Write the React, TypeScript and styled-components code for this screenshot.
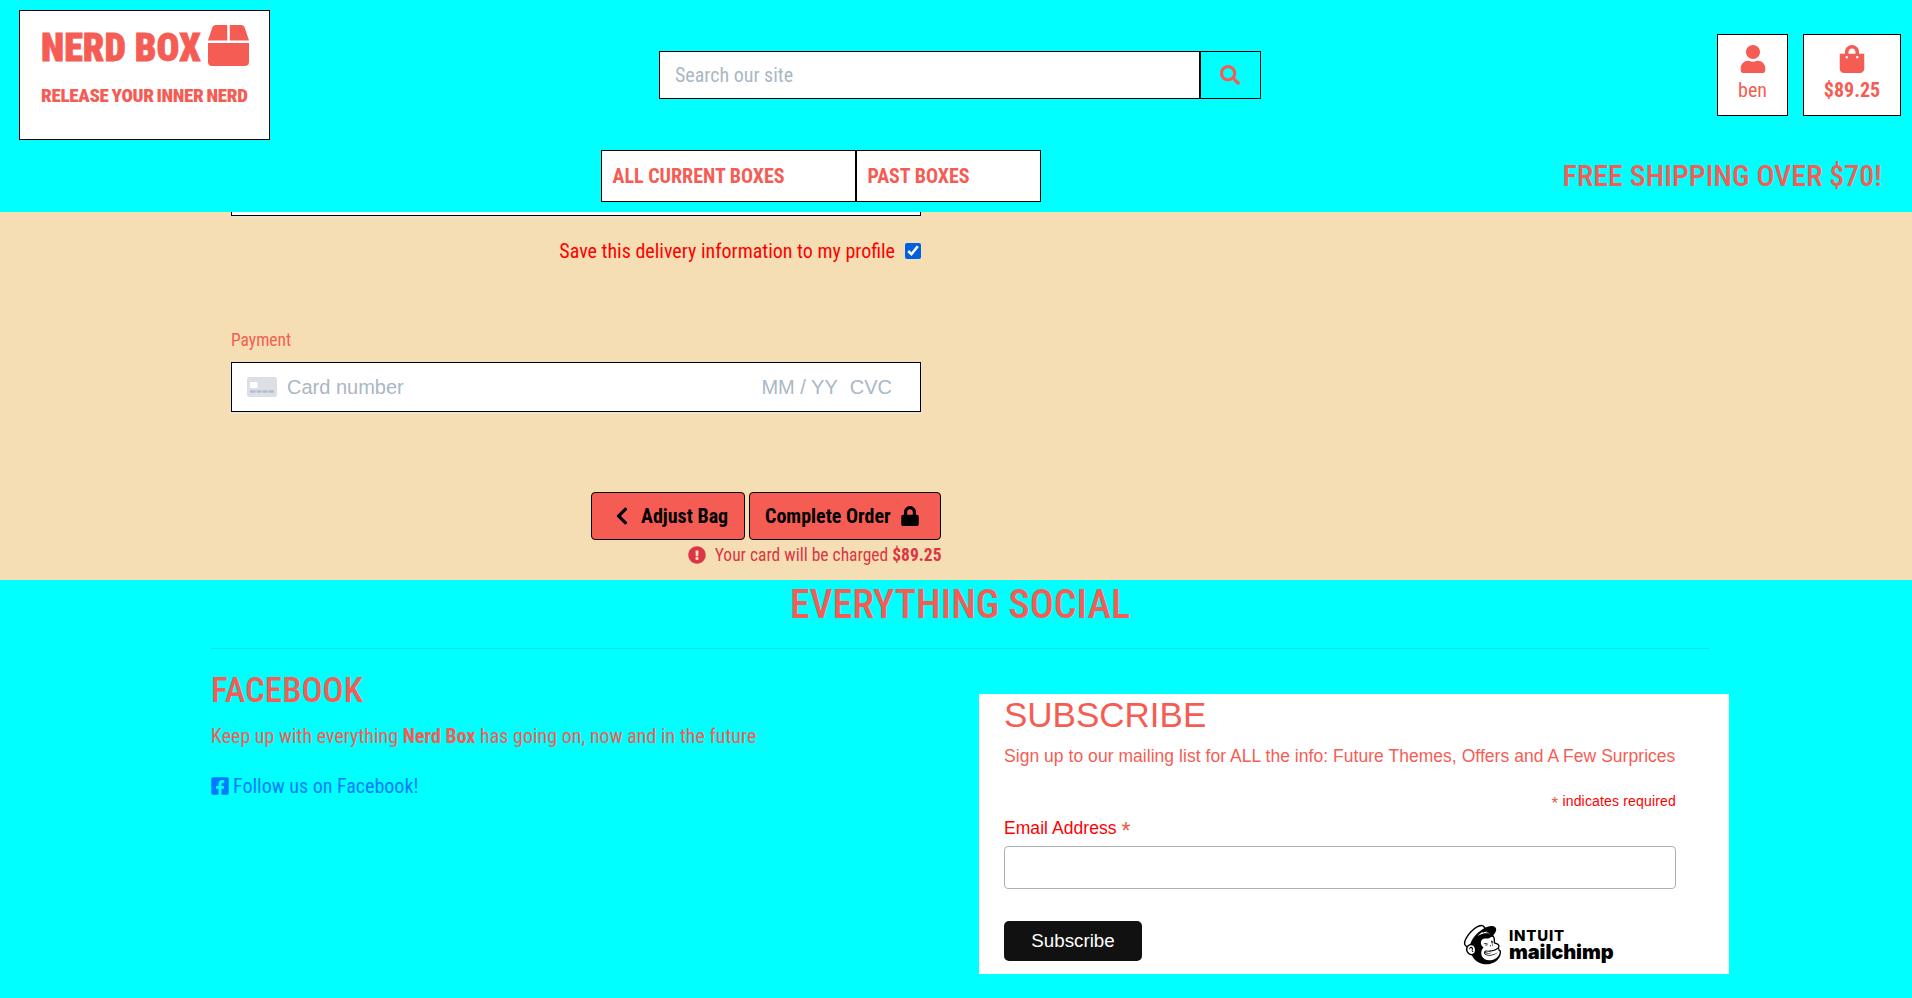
import React from 'react';
import styled, { createGlobalStyle } from 'styled-components';
import {
  FaBox, FaUser, FaShoppingBag, FaSearch, FaLock, FaChevronLeft,
  FaExclamationCircle, FaFacebookSquare, FaMailchimp,
} from 'react-icons/fa';

const coral = '#f55d54';
const condensed = "'Roboto Condensed', Roboto, sans-serif";
const arial = "'Liberation Sans', Arial, sans-serif";

const GlobalStyle = createGlobalStyle`
  *, *::before, *::after { box-sizing: border-box; }
  body { margin: 0; font: 400 20px/30px ${condensed}; color: ${coral}; background: aqua; overflow: hidden; }
  h1, h2, h3, p { margin: 0; }
  svg { display: block; flex: none; }
  a { color: inherit; text-decoration: none; }
  button, input { font: inherit; }
`;

const Page = styled.div`height: 998px; overflow: hidden; background: aqua;`;

const Header = styled.header`height: 212px; background: aqua;`;
const TopRow = styled.div`display: flex; align-items: flex-start; height: 150px; padding: 10px 11px 0 19px;`;

const LogoCard = styled.a`
  display: block; width: 251px; height: 130px; padding: 14px 0 0 21px;
  background: #fff; border: 1px solid #000;
`;
const LogoTop = styled.div`display: flex; align-items: flex-start; gap: 6px; height: 48px;`;
const LogoName = styled.span`
  width: 161px; padding-top: 4px; font-weight: 900; font-size: 38px; line-height: 38px;
  letter-spacing: 0.1px; white-space: nowrap; -webkit-text-stroke: 0.8px ${coral};
`;
const Tagline = styled.div`
  margin-top: 11px; font-weight: 900; font-size: 19px; line-height: 24px; white-space: nowrap;
  letter-spacing: -0.3px; word-spacing: -1.2px;
`;

const SearchForm = styled.form`display: flex; margin: 41px 0 0 389px; width: 602px; height: 48px;`;
const SearchInput = styled.input`
  width: 541px; padding: 0 15px; border: 1px solid #000; border-radius: 0; background: #fff; outline: 0;
  &::placeholder { color: #aab7c4; opacity: 1; }
`;
const SearchButton = styled.button`
  display: flex; align-items: center; justify-content: center; width: 61px; padding: 0 2px 1px 0;
  border: 1px solid #000; background: aqua; color: ${coral};
`;

const Account = styled.div`display: flex; gap: 15px; margin: 24px 0 0 auto;`;
const AccountLink = styled.a<{ $w: number; $bold?: boolean }>`
  display: flex; flex-direction: column; align-items: center; gap: 2px;
  width: ${(p) => p.$w}px; height: 82px; padding-top: 10px;
  border: 1px solid #000; background: #fff; font-weight: ${(p) => (p.$bold ? 700 : 400)};
`;

const NavRow = styled.div`display: flex; align-items: center; height: 52px; padding: 0 30px 0 601px;`;
const NavItem = styled.a<{ $w: number }>`
  display: flex; align-items: center; width: ${(p) => p.$w}px; height: 52px; padding-left: 10.500px;
  border: 1px solid #000; background: #fff; font-weight: 700;
`;
const Shipping = styled.h3`margin-left: auto; font-size: 30px; line-height: 36px; font-weight: 500;`;

const Checkout = styled.main`height: 368px; background: #f5deb3; overflow: hidden;`;
const Form = styled.div`width: 690px; margin-left: 231px;`;
const FieldEnd = styled.div`
  height: 4px; background: #fff; border: 1px solid #000; border-top: 0;
  box-shadow: 0 1px 3px 0 #e6ebf1;
`;
const SaveRow = styled.label`
  display: flex; align-items: center; justify-content: flex-end; gap: 10px; margin-top: 20px; color: #f00;
`;
const Check = styled.input`width: 16px; height: 16px; margin: 0; accent-color: #0060df;`;
const Legend = styled.div`margin-top: 60px; font-size: 17.5px; line-height: 28px;`;
const CardField = styled.div`
  display: flex; align-items: center; height: 50px; margin-top: 8px; padding: 0 28px 0 15px;
  border: 1px solid #000; background: #fff; color: #aab7c4; font-family: ${arial};
  box-shadow: 0 1px 3px 0 #e6ebf1;
`;
const CardLabel = styled.span`margin: 0 auto 0 10px;`;
const Cvc = styled.span`margin-left: 12px;`;

const Actions = styled.div`display: flex; justify-content: flex-end; gap: 4px; width: 710px; margin-top: 80px;`;
const Action = styled.a<{ $w: number; $gap: number; $pad: number }>`
  display: flex; align-items: center; gap: ${(p) => p.$gap}px; width: ${(p) => p.$w}px; height: 48px;
  padding-left: ${(p) => p.$pad}px; border: 1px solid #000; border-radius: 4px;
  background: ${coral}; color: #000; font-weight: 700; white-space: nowrap;
`;
const Charge = styled.p`
  display: flex; align-items: center; justify-content: flex-end; width: 710.5px; font-size: 17.5px;
  line-height: 30px; color: #dc3545;
  svg { margin-right: 9px; }
  span { white-space: pre; }
`;

const Social = styled.footer`width: 1498px; margin-left: 211px;`;
const SocialTitle = styled.h1`
  height: 68px; padding-top: 1px; font-size: 40px; line-height: 48px; font-weight: 500; text-align: center;
`;
const Columns = styled.div`
  display: flex; justify-content: space-between; width: 1518px; border-top: 1px solid transparent;
`;
const Rule = styled.div`height: 1px; background: rgba(0, 0, 0, 0.1);`;
const Facebook = styled.section`padding-top: 20px;`;
const SectionTitle = styled.h2`font-size: 35px; line-height: 42px; font-weight: 500; margin-bottom: 9px;`;
const FollowLink = styled.a`
  display: flex; align-items: center; gap: 3px; margin: 20px 0 0 -1px; color: #007bff;
`;

const Signup = styled.section`
  width: 750px; height: 280px; margin-top: 44px; padding: 0 53px 0 25px; background: #fff;
  font-family: ${arial}; font-size: 17.5px;
`;
const SignupTitle = styled.h2`font-size: 35px; line-height: 42px; font-weight: 400;`;
const SignupText = styled.p`margin-top: 5px; line-height: 30px; letter-spacing: 0.04px; white-space: nowrap;`;
const Required = styled.p`
  margin-top: 16px; height: 28px; font-size: 14px; line-height: 28px; letter-spacing: 0.17px;
  text-align: right; color: #f00;
`;
const Star = styled.span<{ $size: number; $drop: number }>`
  color: #e85c41; font-size: ${(p) => p.$size}px; line-height: 0; vertical-align: -${(p) => p.$drop}px;
`;
const EmailLabel = styled.label`display: block; height: 31px; line-height: 27px; letter-spacing: 0.06px; color: #f00;`;
const EmailInput = styled.input`
  display: block; width: 672px; height: 43px; border: 1px solid #abb0b2; border-radius: 4px; background: #fff;
`;
const SignupFoot = styled.div`display: flex; align-items: flex-start; margin-top: 32px;`;
const SubscribeButton = styled.button`
  width: 138px; height: 40px; border: 0; border-radius: 5px; background: #111; color: #fff; font-size: 18.75px;
`;
const Badge = styled.div`display: flex; gap: 4px; margin: 1px 0 0 318px; color: #000;`;
const BadgeWords = styled.div`
  display: flex; flex-direction: column; font-family: Inter, sans-serif; padding-top: 6px;
`;
const Intuit = styled.span`font-size: 15px; line-height: 15px; font-weight: 800; letter-spacing: 0.8px;`;
const Mailchimp = styled.span`font-size: 20px; line-height: 19px; font-weight: 900; letter-spacing: -0.1px;`;

const CardIcon = () => (
  <svg width="30" height="20" viewBox="0 0 30 20">
    <rect width="30" height="20" rx="2" fill="#dcdfe6" />
    <rect x="3" y="5" width="7.5" height="6" rx="1" fill="#fff" />
    <path d="M4 14.5h3.5M10.5 14.5h3M16.5 14.5h3M22.500 14.5h3.5" stroke="#b5bccb" strokeWidth="2.4" strokeLinecap="round" />
  </svg>
);

export default function App() {
  return (
    <Page>
      <GlobalStyle />
      <Header>
        <TopRow>
          <LogoCard>
            <LogoTop><LogoName>NERD BOX</LogoName><FaBox size={41} /></LogoTop>
            <Tagline>RELEASE YOUR INNER NERD</Tagline>
          </LogoCard>
          <SearchForm>
            <SearchInput placeholder="Search our site" />
            <SearchButton type="button"><FaSearch size={20} /></SearchButton>
          </SearchForm>
          <Account>
            <AccountLink $w={71}><FaUser size={28} />ben</AccountLink>
            <AccountLink $w={98} $bold><FaShoppingBag size={28} />$89.25</AccountLink>
          </Account>
        </TopRow>
        <NavRow>
          <NavItem $w={255}>ALL CURRENT BOXES</NavItem>
          <NavItem $w={185}>PAST BOXES</NavItem>
          <Shipping>FREE SHIPPING OVER $70!</Shipping>
        </NavRow>
      </Header>
      <Checkout>
        <Form>
          <FieldEnd />
          <SaveRow>Save this delivery information to my profile<Check type="checkbox" defaultChecked /></SaveRow>
          <Legend>Payment</Legend>
          <CardField>
            <CardIcon /><CardLabel>Card number</CardLabel><span>MM / YY</span><Cvc>CVC</Cvc>
          </CardField>
          <Actions>
            <Action $w={154} $gap={9} $pad={20}><FaChevronLeft size={20} /><span>Adjust Bag</span></Action>
            <Action $w={192} $gap={9} $pad={15}><span>Complete Order</span><FaLock size={20} /></Action>
          </Actions>
          <Charge><FaExclamationCircle size={18} /><span>Your card will be charged <b>$89.25</b></span></Charge>
        </Form>
      </Checkout>
      <Social>
        <SocialTitle>EVERYTHING SOCIAL</SocialTitle>
        <Rule />
        <Columns>
          <Facebook>
            <SectionTitle>FACEBOOK</SectionTitle>
            <p>Keep up with everything <b>Nerd Box</b> has going on, now and in the future</p>
            <FollowLink><FaFacebookSquare size={20} />Follow us on Facebook!</FollowLink>
          </Facebook>
          <Signup>
            <SignupTitle>SUBSCRIBE</SignupTitle>
            <SignupText>Sign up to our mailing list for ALL the info: Future Themes, Offers and A Few Surprices</SignupText>
            <Required><Star $size={17} $drop={3}>*</Star> indicates required</Required>
            <EmailLabel>Email Address <Star $size={23} $drop={5}>*</Star></EmailLabel>
            <EmailInput />
            <SignupFoot>
              <SubscribeButton>Subscribe</SubscribeButton>
              <Badge>
                <FaMailchimp size={45} />
                <BadgeWords><Intuit>INTUIT</Intuit><Mailchimp>mailchimp</Mailchimp></BadgeWords>
              </Badge>
            </SignupFoot>
          </Signup>
        </Columns>
      </Social>
    </Page>
  );
}
